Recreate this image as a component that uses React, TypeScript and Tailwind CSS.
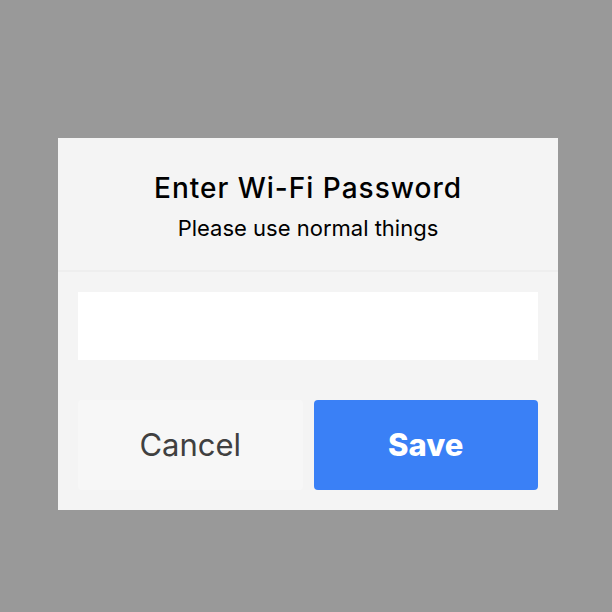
import React from "react";

const App = () => {
  return (
    <div className="w-[612px] h-[612px] bg-[#999999] pt-[138px] pl-[58px] font-['Inter','Liberation_Sans',sans-serif]">
      <div className="w-[500px] bg-[#f4f4f4] flex flex-col">
        <div className="h-[134px] flex flex-col items-center pt-[33px] border-b-2 border-[#eeeeee]">
          <h2 className="text-[28px] leading-[34px] tracking-[1px] font-medium text-black">Enter Wi-Fi Password</h2>
          <p className="mt-[9px] text-[22px] leading-[28px] text-black">Please use normal things</p>
        </div>
        <div className="px-[20px] pt-[20px] pb-[20px]">
          <input type="password" className="w-full h-[68px] bg-white outline-none block" />
          <div className="mt-[40px] flex gap-[11px]">
            <button className="flex-1 h-[90px] rounded-[4px] bg-[#f7f7f7] text-[#404040] text-[31px]">
              Cancel
            </button>
            <button className="flex-1 h-[90px] rounded-[4px] bg-[#3a80f6] text-white text-[31px] font-extrabold">
              Save
            </button>
          </div>
        </div>
      </div>
    </div>
  );
};

export default App;
